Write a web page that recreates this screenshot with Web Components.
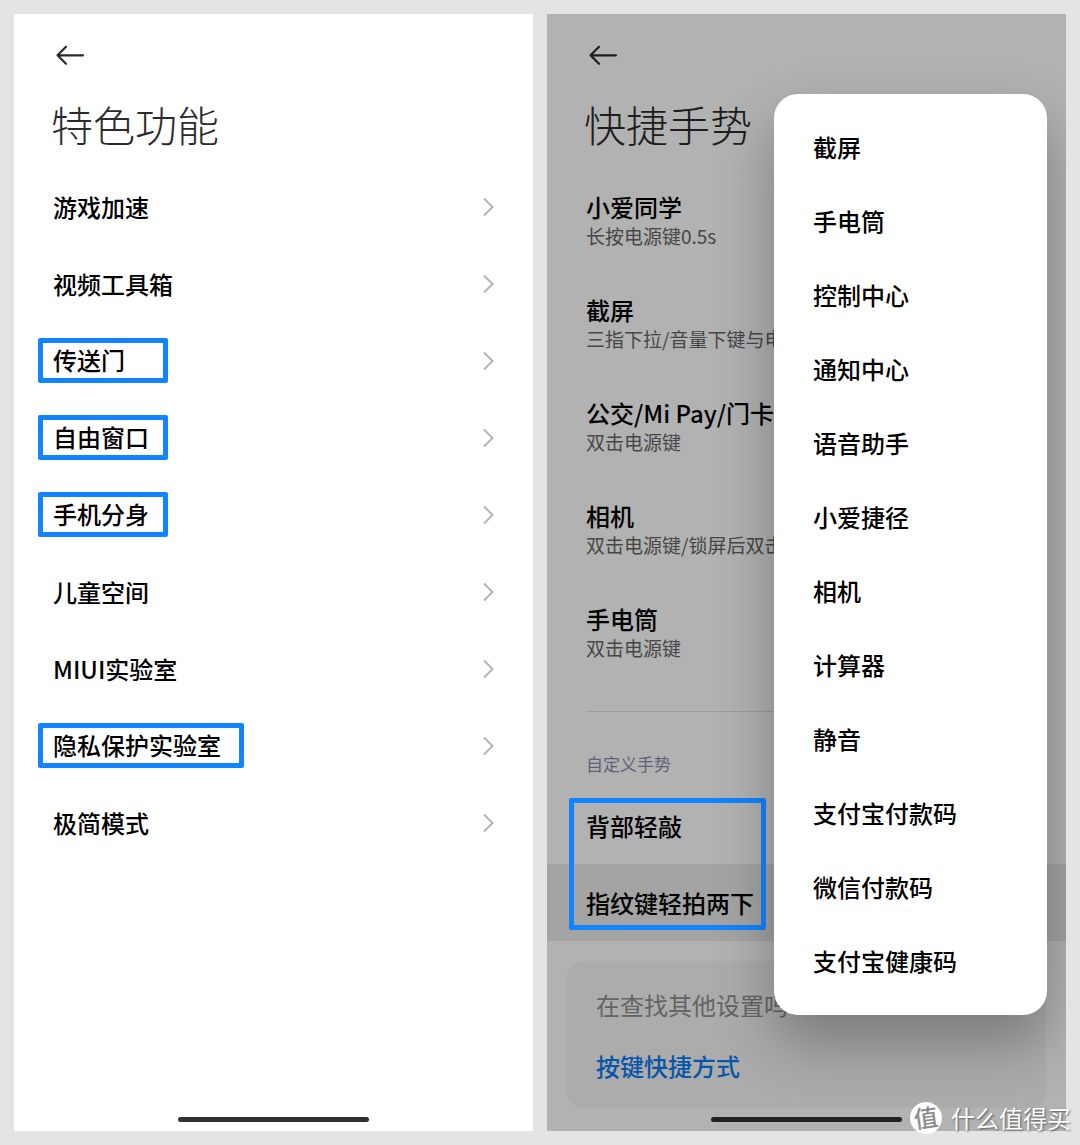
<!DOCTYPE html>
<html lang="zh-CN">
<head>
<meta charset="UTF-8">
<meta name="viewport" content="width=device-width, initial-scale=1.0">
<title>特色功能</title>
<style>
    body {
        margin: 0;
        background: #e4e4e4;
        color: #000;
        font-family: "Noto Sans CJK SC", sans-serif;
    }

    main {
        display: grid;
        grid-template-columns: 1fr 1fr;
        gap: 14px;
        padding: 14px;
        min-height: 100vh;
        box-sizing: border-box;
    }
</style>
</head>
<body>
<main>
    <phone-screen titulo="特色功能">
        <setting-row arrow>游戏加速</setting-row>
        <setting-row arrow>视频工具箱</setting-row>
        <setting-row arrow mark>传送门</setting-row>
        <setting-row arrow mark>自由窗口</setting-row>
        <setting-row arrow mark>手机分身</setting-row>
        <setting-row arrow>儿童空间</setting-row>
        <setting-row arrow>MIUI实验室</setting-row>
        <setting-row arrow mark="wide">隐私保护实验室</setting-row>
        <setting-row arrow>极简模式</setting-row>
    </phone-screen>

    <phone-screen titulo="快捷手势" dimmed>
        <setting-row detail="长按电源键0.5s">小爱同学</setting-row>
        <setting-row detail="三指下拉/音量下键与电源键">截屏</setting-row>
        <setting-row detail="双击电源键">公交/Mi Pay/门卡</setting-row>
        <setting-row detail="双击电源键/锁屏后双击">相机</setting-row>
        <setting-row detail="双击电源键">手电筒</setting-row>
        <setting-group titulo="自定义手势">
            <setting-row>背部轻敲</setting-row>
            <setting-row active>指纹键轻拍两下</setting-row>
        </setting-group>
        <hint-card titulo="在查找其他设置吗？">按键快捷方式</hint-card>
        <popup-menu slot="popup">
            <menu-option>截屏</menu-option>
            <menu-option>手电筒</menu-option>
            <menu-option>控制中心</menu-option>
            <menu-option>通知中心</menu-option>
            <menu-option>语音助手</menu-option>
            <menu-option>小爱捷径</menu-option>
            <menu-option>相机</menu-option>
            <menu-option>计算器</menu-option>
            <menu-option>静音</menu-option>
            <menu-option>支付宝付款码</menu-option>
            <menu-option>微信付款码</menu-option>
            <menu-option>支付宝健康码</menu-option>
        </popup-menu>
    </phone-screen>
</main>
<site-watermark>什么值得买</site-watermark>

<script>
class PhoneScreen extends HTMLElement {
    constructor() {
        super();
        this.attachShadow({ mode: 'open' });
    }

    connectedCallback() {
        const titulo = this.getAttribute('titulo') || '';

        this.shadowRoot.innerHTML = `
            <style>
                :host {
                    display: flex;
                    flex-direction: column;
                    position: relative;
                    min-width: 0;
                    overflow: hidden;
                    background: #fff;
                }

                header {
                    padding: 27px 37px 16px;
                }

                button {
                    display: block;
                    margin: 0 2px 27px;
                    padding: 0;
                    border: 0;
                    background: none;
                }

                svg {
                    display: block;
                }

                h1 {
                    margin: 0;
                    font-size: 42px;
                    line-height: 56px;
                    font-weight: 300;
                    color: #2b2b2b;
                    white-space: nowrap;
                }

                .pill {
                    width: 191px;
                    height: 5px;
                    margin: auto auto 9px;
                    border-radius: 3px;
                    background: #303030;
                }

                .scrim {
                    display: none;
                    position: absolute;
                    inset: 0;
                    z-index: 1;
                    background: rgba(0, 0, 0, 0.3);
                }

                :host([dimmed]) .scrim {
                    display: block;
                }
            </style>
            <header>
                <button type="button" aria-label="返回">
                    <svg width="32" height="28" viewBox="0 0 32 28" fill="none" stroke="#2b2b2b" stroke-width="2.2" stroke-linecap="round" stroke-linejoin="round">
                        <path d="M30 14.3H4.5M13 5.8L4.5 14.3L13 22.8"/>
                    </svg>
                </button>
                <h1>${titulo}</h1>
            </header>
            <slot></slot>
            <div class="pill"></div>
            <div class="scrim"></div>
            <slot name="popup"></slot>
        `;
    }
}

class SettingRow extends HTMLElement {
    constructor() {
        super();
        this.attachShadow({ mode: 'open' });
    }

    connectedCallback() {
        const detail = this.getAttribute('detail');

        this.shadowRoot.innerHTML = `
            <style>
                :host {
                    display: block;
                }

                :host([active]) {
                    background: #ebebeb;
                }

                a {
                    display: flex;
                    align-items: center;
                    justify-content: space-between;
                    height: 77px;
                    padding: 0 39px;
                    color: inherit;
                    text-decoration: none;
                    white-space: nowrap;
                }

                :host([detail]) a {
                    height: 103px;
                }

                .label {
                    display: block;
                    font-size: 24px;
                    line-height: 32px;
                    font-weight: 500;
                }

                .detail {
                    display: block;
                    font-size: 19px;
                    line-height: 26px;
                    color: #666;
                }

                :host([mark]) .label {
                    box-sizing: border-box;
                    min-width: 130px;
                    margin-left: -15px;
                    padding: 1px 10px 2px;
                    border: 5px solid #1384ff;
                    border-radius: 2px;
                }

                :host([mark="wide"]) .label {
                    min-width: 206px;
                }
            </style>
            <a href="#">
                <span>
                    <span class="label"><slot></slot></span>
                    ${detail ? `<span class="detail">${detail}</span>` : ''}
                </span>
                ${this.hasAttribute('arrow') ? `
                <svg width="12" height="20" viewBox="0 0 12 20" fill="none" stroke="#b4b4b4" stroke-width="2">
                    <path d="M2 1.5L10.5 10L2 18.5"/>
                </svg>` : ''}
            </a>
        `;
    }
}

class SettingGroup extends HTMLElement {
    constructor() {
        super();
        this.attachShadow({ mode: 'open' });
    }

    connectedCallback() {
        this.shadowRoot.innerHTML = `
            <style>
                :host {
                    display: block;
                }

                hr {
                    height: 1px;
                    margin: 28px 39px 40px;
                    border: 0;
                    background: #e2e2e2;
                }

                h2 {
                    margin: 0 39px 11px;
                    font-size: 17px;
                    line-height: 24px;
                    font-weight: 400;
                    color: #888fac;
                }

                .rows {
                    position: relative;
                }

                /* frame drawn over both rows, above the scrim */
                .rows::after {
                    content: "";
                    position: absolute;
                    inset: 11px auto 11px 22px;
                    z-index: 2;
                    box-sizing: border-box;
                    width: 197px;
                    border: 5px solid #1384ff;
                    border-radius: 2px;
                    pointer-events: none;
                }
            </style>
            <hr>
            <h2>${this.getAttribute('titulo')}</h2>
            <div class="rows"><slot></slot></div>
        `;
    }
}

class HintCard extends HTMLElement {
    constructor() {
        super();
        this.attachShadow({ mode: 'open' });
    }

    connectedCallback() {
        this.shadowRoot.innerHTML = `
            <style>
                :host {
                    display: block;
                    margin: 20px 20px 6px;
                    padding: 28px 29px 26px;
                    border-radius: 16px;
                    background: #f7f7f7;
                    font-size: 24px;
                    line-height: 32px;
                }

                p {
                    margin: 0 0 29px;
                    color: #909090;
                }

                a {
                    display: block;
                    color: #0d7cf2;
                    font-weight: 500;
                    text-decoration: none;
                }
            </style>
            <p>${this.getAttribute('titulo')}</p>
            <a href="#"><slot></slot></a>
        `;
    }
}

class PopupMenu extends HTMLElement {
    constructor() {
        super();
        this.attachShadow({ mode: 'open' });
    }

    connectedCallback() {
        this.setAttribute('role', 'menu');
        this.shadowRoot.innerHTML = `
            <style>
                :host {
                    display: block;
                    position: absolute;
                    top: 80px;
                    right: 19px;
                    z-index: 3;
                    box-sizing: border-box;
                    width: 273px;
                    padding: 16px 0 17px;
                    border-radius: 24px;
                    background: #fff;
                    box-shadow: 0 28px 60px rgba(0, 0, 0, 0.3);
                }
            </style>
            <slot></slot>
        `;
    }
}

class MenuOption extends HTMLElement {
    constructor() {
        super();
        this.attachShadow({ mode: 'open' });
    }

    connectedCallback() {
        this.shadowRoot.innerHTML = `
            <style>
                :host {
                    display: block;
                }

                button {
                    display: block;
                    width: 100%;
                    height: 74px;
                    padding: 0 39px;
                    border: 0;
                    background: none;
                    color: inherit;
                    font: inherit;
                    font-size: 24px;
                    line-height: 32px;
                    font-weight: 500;
                    text-align: left;
                }
            </style>
            <button type="button" role="menuitem"><slot></slot></button>
        `;
    }
}

class SiteWatermark extends HTMLElement {
    constructor() {
        super();
        this.attachShadow({ mode: 'open' });
    }

    connectedCallback() {
        this.shadowRoot.innerHTML = `
            <style>
                :host {
                    display: flex;
                    align-items: center;
                    gap: 9px;
                    position: absolute;
                    right: 9px;
                    bottom: 11px;
                    z-index: 4;
                    color: #fff;
                    font-size: 24px;
                    line-height: 32px;
                    text-shadow: 1px 1px 2px rgba(0, 0, 0, 0.5);
                }

                .logo {
                    width: 32px;
                    height: 32px;
                    border-radius: 50%;
                    background: #fff;
                    color: #8c8c8c;
                    line-height: 30px;
                    font-weight: 500;
                    text-align: center;
                    text-shadow: none;
                    transform: rotate(-8deg);
                }
            </style>
            <span class="logo">值</span>
            <slot></slot>
        `;
    }
}

customElements.define('phone-screen', PhoneScreen);
customElements.define('setting-row', SettingRow);
customElements.define('setting-group', SettingGroup);
customElements.define('hint-card', HintCard);
customElements.define('popup-menu', PopupMenu);
customElements.define('menu-option', MenuOption);
customElements.define('site-watermark', SiteWatermark);
</script>
</body>
</html>
